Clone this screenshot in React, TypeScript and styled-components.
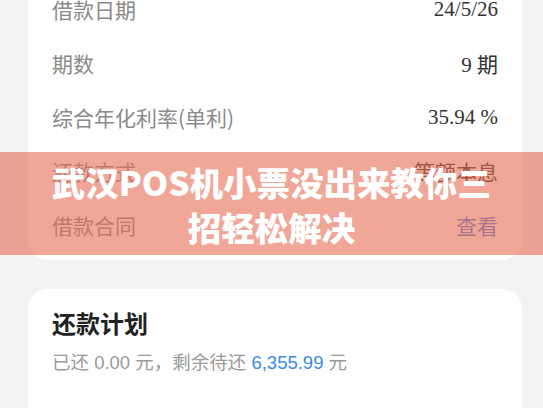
import React from "react";
import styled, { createGlobalStyle } from "styled-components";

const GlobalStyle = createGlobalStyle`
  html, body {
    margin: 0;
    padding: 0;
    background: #f2f3f5;
    overflow: hidden;
  }
  body {
    font-family: "Noto Sans CJK SC", "Noto Sans", sans-serif;
  }
`;

type Row = {
  label: string;
  value: string;
  link?: boolean;
};

const rows: Row[] = [
  { label: "借款日期", value: "24/5/26" },
  { label: "期数", value: "9 期" },
  { label: "综合年化利率(单利)", value: "35.94 %" },
  { label: "还款方式", value: "等额本息" },
  { label: "借款合同", value: "查看", link: true },
];

const Screen = styled.div`
  position: relative;
  width: 543px;
  height: 408px;
  overflow: hidden;
`;

const Page = styled.div`
  display: flex;
  flex-direction: column;
  gap: 29px;
  margin-top: -40px;
  padding: 0 21px 0 28px;
`;

const Card = styled.div`
  background: #fff;
  border-radius: 20px;
  padding: 0 24px;
`;

const InfoCard = styled(Card)`
  padding-top: 22px;
  padding-bottom: 8px;
`;

const InfoRow = styled.div`
  display: flex;
  align-items: center;
  justify-content: space-between;
  height: 54px;
`;

const Label = styled.span`
  font-size: 21px;
  color: #8a8a8a;
`;

const Value = styled.span<{ $link?: boolean }>`
  font-size: 21px;
  font-family: ${(p) =>
    p.$link
      ? `"Noto Sans CJK SC", sans-serif`
      : `"Liberation Serif", "Noto Sans CJK SC", serif`};
  color: ${(p) => (p.$link ? "#4a86e0" : "#333")};
`;

const PlanCard = styled(Card)`
  padding-top: 18px;
  height: 160px;
`;

const PlanTitle = styled.div`
  font-size: 24px;
  line-height: 32px;
  font-weight: 700;
  color: #222;
`;

const PlanSub = styled.div`
  margin-top: 12px;
  font-size: 18.5px;
  line-height: 24px;
  color: #9a9a9a;
  font-family: "Liberation Sans", "Noto Sans CJK SC", sans-serif;
`;

const Amount = styled.span`
  color: #3b8ae6;
`;

const Banner = styled.div`
  position: absolute;
  left: 0;
  right: 0;
  top: 152px;
  height: 103px;
  background: rgba(230, 108, 84, 0.6);
  display: flex;
  align-items: center;
  justify-content: center;
`;

const BannerTitle = styled.h1`
  margin: 0;
  width: 470px;
  text-align: center;
  font-size: 33.5px;
  line-height: 45px;
  font-weight: 900;
  color: #fff;
  font-family: "Noto Sans CJK SC", "Noto Sans", sans-serif;
`;

const App: React.FC = () => {
  return (
    <Screen>
      <GlobalStyle />
      <Page>
        <InfoCard>
          {rows.map((r) => (
            <InfoRow key={r.label}>
              <Label>{r.label}</Label>
              <Value $link={r.link}>{r.value}</Value>
            </InfoRow>
          ))}
        </InfoCard>
        <PlanCard>
          <PlanTitle>还款计划</PlanTitle>
          <PlanSub>
            已还 0.00 元，剩余待还 <Amount>6,355.99</Amount> 元
          </PlanSub>
        </PlanCard>
      </Page>
      <Banner>
        <BannerTitle>武汉POS机小票没出来教你三招轻松解决</BannerTitle>
      </Banner>
    </Screen>
  );
};

export default App;
